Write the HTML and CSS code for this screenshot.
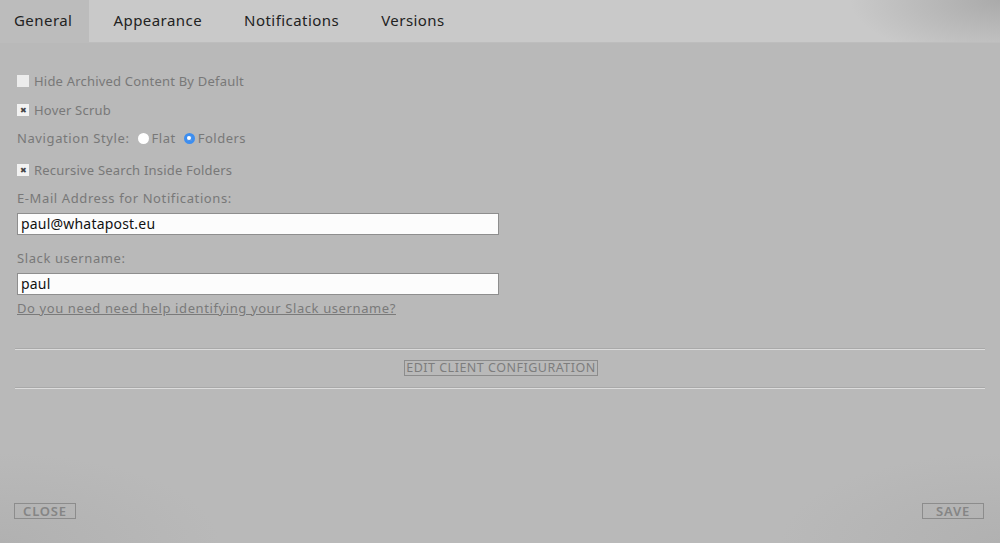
FILE: index.html
```html
<!DOCTYPE html>
<html>
<head>
<meta charset="utf-8">
<link rel="stylesheet" href="styles.css">
</head>
<body>
<div class="page">
  <nav class="tabs">
    <div class="tab active">General</div>
    <div class="tab">Appearance</div>
    <div class="tab">Notifications</div>
    <div class="tab">Versions</div>
  </nav>
  <main class="content">
    <label class="row check-row"><span class="box"></span>Hide Archived Content By Default</label>
    <label class="row check-row"><span class="box checked">&#x2716;</span>Hover Scrub</label>
    <div class="row nav-row"><span class="nav-label">Navigation Style:</span>
      <span class="radio"></span><span class="opt">Flat</span>
      <span class="radio on"></span><span class="opt">Folders</span>
    </div>
    <label class="row check-row rec"><span class="box checked">&#x2716;</span>Recursive Search Inside Folders</label>
    <div class="field-label email-label">E-Mail Address for Notifications:</div>
    <div class="input">paul@whatapost.eu</div>
    <div class="field-label slack-label">Slack username:</div>
    <div class="input">paul</div>
    <a class="help">Do you need need help identifying your Slack username?</a>
    <div class="groove first"></div>
    <div class="center"><span class="btn">EDIT CLIENT CONFIGURATION</span></div>
    <div class="groove"></div>
  </main>
  <footer class="footer">
    <span class="btn small">CLOSE</span>
    <span class="btn small">SAVE</span>
  </footer>
</div>
</body>
</html>
```
FILE: styles.css
```css
html, body {
  margin: 0;
  padding: 0;
}
body {
  width: 1000px;
  height: 543px;
  overflow: hidden;
  background: #b9b9b9;
  font-family: "Noto Sans", "Liberation Sans", sans-serif;
}
.page {
  width: 1000px;
  height: 543px;
  display: flex;
  flex-direction: column;
  background:
    radial-gradient(ellipse 220px 90px at 0px 543px, rgba(165,165,165,0.4), rgba(165,165,165,0) 100%),
    radial-gradient(ellipse 220px 90px at 1000px 543px, rgba(165,165,165,0.4), rgba(165,165,165,0) 100%),
    #b9b9b9;
}
.tabs {
  display: flex;
  height: 43px;
  background:
    radial-gradient(ellipse 150px 60px at 1000px 0px, rgba(160,160,160,0.75), rgba(160,160,160,0) 100%),
    #c9c9c9;
  border-bottom: 1px solid #bdbdbd;
  box-sizing: border-box;
}
.tab {
  height: 43px;
  line-height: 41px;
  padding: 0 21px;
  font-size: 15px;
  letter-spacing: 0.45px;
  color: #222;
}
.tab.active {
  background: #bcbcbc;
  padding: 0 17px 0 14px;
  margin-right: 3px;
}
.content {
  padding: 0 15px 0 17px;
  font-size: 13px;
  letter-spacing: 0.2px;
  color: #787878;
}
.row {
  display: flex;
  align-items: center;
  height: 16px;
}
.check-row:first-child {
  margin-top: 30px;
}
.check-row + .check-row {
  margin-top: 13px;
}
.nav-row {
  margin-top: 12px;
}
.nav-label {
  letter-spacing: 0.6px;
}
.opt {
  letter-spacing: 0.5px;
}
.rec {
  margin-top: 16px !important;
}
.box {
  width: 12px;
  height: 12px;
  background: #ececec;
  margin-right: 5px;
  font-size: 8px;
  line-height: 12px;
  text-align: center;
  color: #444;
  box-sizing: border-box;
  letter-spacing: 0;
}
.box.checked {
  background: #f2f2f2;
}
.radio {
  width: 11px;
  height: 11px;
  border-radius: 50%;
  background: #fff;
  margin: 0 3px 0 8px;
  box-sizing: border-box;
}
.radio.on {
  background: #3d8ef0;
  border: 3.5px solid #3d8ef0;
  background-clip: padding-box;
  position: relative;
  margin-left: 8px;
  margin-right: 3px;
}
.radio.on::after {
  content: "";
  position: absolute;
  left: 0;
  top: 0;
  width: 4px;
  height: 4px;
  border-radius: 50%;
  background: #fff;
}
.field-label {
  height: 16px;
  line-height: 16px;
  letter-spacing: 0.6px;
}
.email-label { margin-top: 12px; }
.slack-label { margin-top: 15px; }
.input {
  width: 482px;
  height: 22px;
  box-sizing: border-box;
  background: #fcfcfc;
  border: 1px solid #8e8e8e;
  color: #111;
  font-size: 14px;
  letter-spacing: 0.2px;
  line-height: 19px;
  padding-left: 3px;
  margin-top: 7px;
}
.help {
  display: block;
  margin-top: 5px;
  text-decoration: underline;
  color: #7a7a7a;
  line-height: 16px;
  letter-spacing: 0.6px;
}
.groove {
  height: 1px;
  border-top: 1px solid #a9a9a9;
  background: #dcdcdc;
  margin-left: -2px;
}
.groove.first {
  margin-top: 32px;
}
.center {
  display: flex;
  justify-content: center;
  margin: 10px 0 11px;
}
.btn {
  display: inline-block;
  border: 1px solid #8c8c8c;
  color: #7d7d7d;
  font-size: 12.5px;
  letter-spacing: 0.5px;
  line-height: 14px;
  padding: 0 1px;
}
.footer {
  margin-top: auto;
  display: flex;
  justify-content: space-between;
  padding: 0 16px 24px 14px;
}
.btn.small {
  width: 62px;
  text-align: center;
  box-sizing: border-box;
  font-size: 13px;
  letter-spacing: 0.8px;
  font-weight: 600;
  color: #858585;
}
```
